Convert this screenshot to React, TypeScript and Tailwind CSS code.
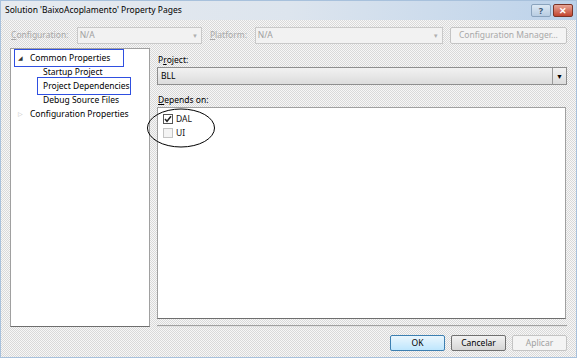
import React from 'react';

const dither =
  'bg-[conic-gradient(#f7f7f7_25%,#d9d9d9_0_50%,#f7f7f7_0_75%,#d9d9d9_0)] bg-[length:2px_2px]';

const Combo = ({ value, className }: { value: string; className: string }) => (
  <div className={`flex h-[17px] items-center justify-between border border-[#c9c9c9] bg-[#f2f2f2] pl-[2px] pr-[3px] text-[#a0a0a0] ${className}`}>
    <span>{value}</span>
    <span className="text-[6px] text-[#b0b0b0]">▼</span>
  </div>
);

const TreeItem = ({ label, indent, arrow }: { label: string; indent: boolean; arrow?: 'open' | 'closed' }) => (
  <div className={`flex h-[14px] items-center whitespace-nowrap ${indent ? 'pl-[32px]' : 'pl-[7px]'}`}>
    {arrow && (
      <span className={`mr-[5px] w-[7px] text-[6px] ${arrow === 'open' ? 'text-[#333]' : 'text-[#bbb]'}`}>
        {arrow === 'open' ? '◢' : '▷'}
      </span>
    )}
    <span>{label}</span>
  </div>
);

const Check = ({ checked, label }: { checked: boolean; label: string }) => (
  <div className="flex h-[14px] items-center gap-[3px] pl-[1px]">
    <span className={`flex h-[10px] w-[10px] items-center justify-center border ${checked ? 'border-[#555] bg-white' : 'border-[#c4c4c4] bg-[#f4f4f4]'}`}>
      {checked && (
        <svg width="8" height="8" viewBox="0 0 8 8">
          <path d="M1 4 L3 6.3 L7 1.2" stroke="#222" strokeWidth="1.5" fill="none" />
        </svg>
      )}
    </span>
    <span className="text-[#111]">{label}</span>
  </div>
);

const Button = ({ label, variant }: { label: string; variant: 'default' | 'normal' | 'disabled' }) => {
  const styles = {
    default: 'border-[#3c7fb1] bg-[linear-gradient(#eaf6fd,#bee6fd)] text-black',
    normal: 'border-[#707070] bg-[linear-gradient(#f2f2f2,#d6d6d6)] text-black',
    disabled: 'border-[#c4c4c4] bg-[#f4f4f4] text-[#a0a0a0]',
  }[variant];
  return (
    <div className={`flex h-[16px] w-[55px] items-center justify-center rounded-[2px] border ${styles}`}>{label}</div>
  );
};

export default function App() {
  return (
    <div
      className={`relative flex h-[358px] w-[577px] flex-col border border-[#a8c1dc] text-[8.5px] leading-none text-black ${dither}`}
      style={{ fontFamily: '"Noto Sans", "Open Sans", "Liberation Sans", sans-serif' }}
    >
      {/* title bar */}
      <div className="flex h-[19px] items-center justify-between bg-[linear-gradient(90deg,#e6eaef,#dde5ee_50%,#bcd2ea)] pl-[4px] pr-[3px]">
        <span className="whitespace-nowrap text-[8.5px] text-black">Solution 'BaixoAcoplamento' Property Pages</span>
        <div className="flex gap-[2px]">
          <div className="flex h-[13px] w-[20px] items-center justify-center rounded-[2px] border border-[#8aa3bd] bg-[linear-gradient(#dce8f4,#b8cde2)] text-[9px] font-bold text-[#3a5470]">?</div>
          <div className="flex h-[13px] w-[20px] items-center justify-center rounded-[2px] border border-[#7a3327] bg-[linear-gradient(#e8a596,#c2452f)] text-[9px] font-bold text-white">✕</div>
        </div>
      </div>

      <div className="flex flex-1 flex-col px-[9px] pt-[7px]">
        {/* configuration row */}
        <div className="flex h-[17px] items-center whitespace-nowrap text-[#a8a8a8]">
          <span className="w-[67px] pl-[1px]"><u>C</u>onfiguration:</span>
          <Combo value="N/A" className="w-[126px]" />
          <span className="ml-[8px] w-[45px]"><u>P</u>latform:</span>
          <Combo value="N/A" className="w-[189px]" />
          <div className="ml-[7px] flex h-[17px] w-[118px] items-center justify-center rounded-[2px] border border-[#c4c4c4] bg-[#f4f4f4]">
            Configuration Manager...
          </div>
        </div>

        <div className="mt-[4px] flex h-[279px]">
          {/* tree */}
          <div className="relative flex w-[140px] flex-col border border-[#a0a0a0] border-b-[#6e6e6e] bg-white pt-[2px]">
            <TreeItem label="Common Properties" indent={false} arrow="open" />
            <TreeItem label="Startup Project" indent />
            <TreeItem label="Project Dependencies" indent />
            <TreeItem label="Debug Source Files" indent />
            <TreeItem label="Configuration Properties" indent={false} arrow="closed" />
            <div className="absolute left-[3px] top-[0px] h-[18px] w-[110px] border border-[#2f4fe0]" />
            <div className="absolute left-[26px] top-[28px] h-[18px] w-[94px] border border-[#2f4fe0]" />
          </div>

          {/* right side */}
          <div className="ml-[7px] flex flex-1 flex-col">
            <div className="flex h-[19px] items-end pb-[3px] pl-[1px]">P<u>r</u>oject:</div>
            <div className="flex h-[18px] border border-[#8e8e8e] bg-[linear-gradient(#f2f2f2,#dcdcdc)]">
              <div className="flex flex-1 items-center pl-[3px]">BLL</div>
              <div className="flex w-[14px] items-center justify-center border-l border-[#9a9a9a] text-[7px]">▼</div>
            </div>
            <div className="flex h-[22px] items-end pb-[3px] pl-[1px]"><u>D</u>epends on:</div>
            <div className="relative flex h-[212px] w-[409px] flex-col border border-[#a0a0a0] border-b-[#6e6e6e] bg-white pl-[4px] pt-[4px]">
              <Check checked label="DAL" />
              <Check checked={false} label="UI" />
              <svg className="absolute left-[-12px] top-[0px]" width="70" height="40" viewBox="0 0 70 40">
                <ellipse cx="35" cy="20" rx="33.5" ry="19" fill="none" stroke="#000" strokeWidth="1" />
              </svg>
            </div>
            <div className="mt-[6px] h-[2px] border-t border-[#a0a0a0] bg-[#e0e0e0]" />
          </div>
        </div>

        {/* buttons */}
        <div className="mt-[8px] flex justify-end gap-[6px]">
          <Button label="OK" variant="default" />
          <Button label="Cancelar" variant="normal" />
          <Button label="Aplicar" variant="disabled" />
        </div>
      </div>
    </div>
  );
}
